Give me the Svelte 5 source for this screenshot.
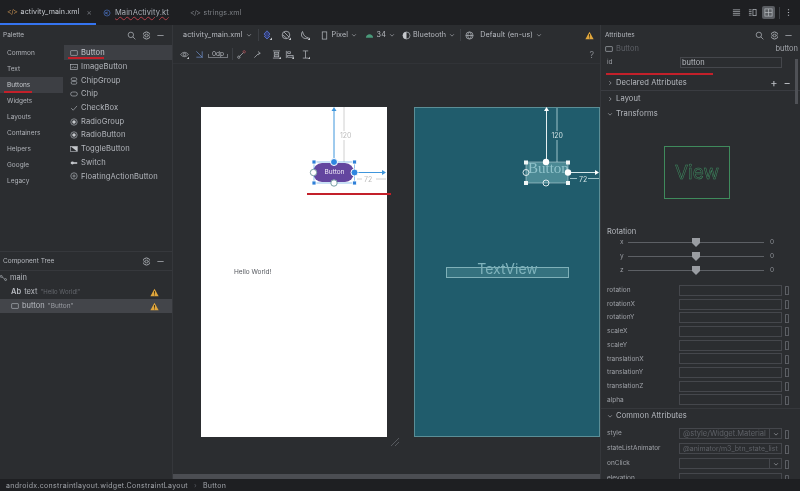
<script>
  const cats = ['Common','Text','Buttons','Widgets','Layouts','Containers','Helpers','Google','Legacy'];
  const items = ['Button','ImageButton','ChipGroup','Chip','CheckBox','RadioGroup','RadioButton','ToggleButton','Switch','FloatingActionButton'];
  const fields = ['rotation','rotationX','rotationY','scaleX','scaleY','translationX','translationY','translationZ','alpha'];
  const sliders = ['x','y','z'];
</script>

{#snippet gear()}
  <svg class="ic" viewBox="0 0 10 10"><circle cx="5" cy="5" r="1.5"/><path d="M4 1h2l.3 1.2 1.2-.5 1 1.7-1 .9.1 1.4 1 .9-1 1.7-1.2-.5L6 9H4l-.3-1.2-1.2.5-1-1.7 1-.9-.1-1.4-1-.9 1-1.7 1.2.5z"/></svg>
{/snippet}
{#snippet search()}
  <svg class="ic" viewBox="0 0 10 10"><circle cx="4.3" cy="4.3" r="3"/><path d="M6.5 6.5 9.3 9.3"/></svg>
{/snippet}
{#snippet minus()}
  <svg class="ic" viewBox="0 0 10 10"><path d="M1.5 5h7"/></svg>
{/snippet}
{#snippet warn()}
  <svg class="warn" viewBox="0 0 10 10"><path d="M5 .8 9.6 9.2H.4z" fill="#e0a63c"/><path d="M5 3.4v3M5 7.2v1" stroke="#3a2d12" stroke-width="1"/></svg>
{/snippet}
{#snippet chev()}
  <svg class="chev" viewBox="0 0 8 8"><path d="M1.5 3 4 5.5 6.5 3"/></svg>
{/snippet}
{#snippet arrowR()}
  <svg class="chev" viewBox="0 0 8 8"><path d="M3 1.5 5.5 4 3 6.5"/></svg>
{/snippet}
{#snippet corner()}
  <path class="fill" d="M7.6 10H10V7.6z"/>
{/snippet}

<div class="app">
  <header class="tabs">
    <div class="tab active">
      <span class="code orange">&lt;/&gt;</span><span>activity_main.xml</span><span class="close">×</span>
    </div>
    <div class="tab kt">
      <svg class="ic kotlin" viewBox="0 0 10 10"><circle cx="5" cy="5" r="3.8"/><path d="M3.5 3.5v3M3.5 5 6.5 3.5M3.5 5l3 1.8"/></svg>
      <span class="squiggle">MainActivity.kt</span>
    </div>
    <div class="tab dim">
      <span class="code">&lt;/&gt;</span><span>strings.xml</span>
    </div>
    <div class="spacer"></div>
    <div class="modes">
      <svg class="ic" viewBox="0 0 10 10"><path d="M1 2h8M1 4h8M1 6h8M1 8h8"/></svg>
      <svg class="ic m2" viewBox="0 0 10 10"><path d="M1 2h3M1 4h3M1 6h3M1 8h3"/><rect x="5.5" y="1.5" width="3.5" height="7"/></svg>
      <span class="mode-on"><svg class="ic" viewBox="0 0 10 10"><rect x="1" y="1" width="8" height="8"/><path d="M1 5h8M5 1v8"/></svg></span>
      <i class="sep modesep"></i>
      <svg class="ic dots" viewBox="0 0 10 10"><path d="M5 1.5v1M5 4.5v1M5 7.5v1" stroke-width="1.3"/></svg>
    </div>
  </header>

  <div class="main">
    <aside class="left">
      <section class="palette">
        <div class="phead"><span>Palette</span><span class="tools">{@render search()}{@render gear()}{@render minus()}</span></div>
        <div class="pbody">
          <ul class="cats">
            {#each cats as c}
              <li class:sel={c === 'Buttons'}>{c}</li>
            {/each}
          </ul>
          <ul class="items">
            {#each items as it, i}
              <li class:sel={i === 0}>
                <svg class="ic" viewBox="0 0 10 10">
                  {#if i === 0}<rect x=".8" y="2" width="8.4" height="6" rx=".6"/>
                  {:else if i === 1}<rect x=".8" y="2" width="8.4" height="6"/><path d="M2 6.5 4 4.5l1.5 1.5L7 5l1 1.5"/>
                  {:else if i === 2}<rect x="1.5" y="1" width="7" height="3.5" rx="1.7"/><rect x="1.5" y="5.5" width="7" height="3.5" rx="1.7"/>
                  {:else if i === 3}<rect x=".8" y="2.5" width="8.4" height="5" rx="2.5"/>
                  {:else if i === 4}<path d="M1.5 5.2 4 7.8 8.8 2.4"/>
                  {:else if i === 5 || i === 6}<circle cx="5" cy="5" r="4"/><circle class="fill" cx="5" cy="5" r="2.2"/>
                  {:else if i === 7}<rect x=".8" y="2" width="8.4" height="6"/><path class="fill" d="M1 2h8v6z"/>
                  {:else if i === 8}<rect class="fill" x="1" y="4" width="8" height="2"/><circle class="fill" cx="3" cy="5" r="1.8"/>
                  {:else}<circle cx="5" cy="5" r="4"/><path d="M5 3v4M3 5h4"/>{/if}
                </svg>
                <span>{it}</span>
              </li>
            {/each}
          </ul>
        </div>
      </section>
      <section class="tree">
        <div class="phead thead"><span>Component Tree</span><span class="tools">{@render gear()}{@render minus()}</span></div>
        <div class="node root">
          <svg class="ic" viewBox="0 0 10 10"><circle cx="1.5" cy="3" r="1.2"/><circle cx="7" cy="7" r="1.2"/><path d="M2.5 3.8 6 6.3"/></svg>
          <span>main</span>
        </div>
        <div class="node n1"><b>Ab</b> <span>text</span> <em>"Hello World!"</em>{@render warn()}</div>
        <div class="node n1 sel">
          <svg class="ic" viewBox="0 0 10 10"><rect x=".8" y="2" width="8.4" height="6" rx=".6"/></svg>
          <span>button</span> <span class="q">"Button"</span>{@render warn()}
        </div>
      </section>
    </aside>

    <section class="center">
      <div class="bar1">
        <span class="t">activity_main.xml</span>{@render chev()}
        <i class="sep s1"></i>
        <svg class="ib layers" viewBox="0 0 10 10"><path d="M5 .8 8 4 5 7.5 2 4z"/><path d="M2 6l3 3 3-3"/>{@render corner()}</svg>
        <svg class="ib orient" viewBox="0 0 10 10"><circle cx="5" cy="5" r="3.8"/><path d="M3 2 8 7M2 5l4 3.5"/>{@render corner()}</svg>
        <svg class="ib moon" viewBox="0 0 10 10"><path d="M2.5 1.5C3.5 5.500 5 7 8.500 8 6 9.500 1.500 8 1.500 5 1.500 3.500 1.800 2.300 2.500 1.500z"/>{@render corner()}</svg>
        <svg class="ib phone" viewBox="0 0 10 10"><rect x="2.5" y="1" width="5" height="8"/></svg>
        <span class="t pixel">Pixel</span>{@render chev()}
        <svg class="ib api" viewBox="0 0 10 10"><path d="M1 7.5C1 5 3 3.5 5 3.5S9 5 9 7.5z" fill="#4a9a7a" stroke="none"/></svg>
        <span class="t num">34</span>{@render chev()}
        <svg class="ib theme" viewBox="0 0 10 10"><circle cx="5" cy="5" r="3.9"/><path class="fill" d="M5 1a4 4 0 0 0 0 8z"/></svg>
        <span class="t bt">Bluetooth</span>{@render chev()}
        <i class="sep s2"></i>
        <svg class="ib globe" viewBox="0 0 10 10"><circle cx="5" cy="5" r="4"/><path d="M1 5h8M5 1c-2.5 2.5-2.5 5.5 0 8M5 1c2.5 2.500 2.500 5.500 0 8"/></svg>
        <span class="t def">Default (en-us)</span>{@render chev()}
        <span class="spacer"></span>
        {@render warn()}
      </div>
      <div class="bar2">
        <svg class="ib" viewBox="0 0 10 10"><path d="M.8 5C3 1.800 7 1.800 9.200 5 7 8.200 3 8.200.8 5z"/><circle cx="5" cy="5" r="1.4"/>{@render corner()}</svg>
        <svg class="ib b-magnet" viewBox="0 0 10 10"><path d="M1.5 1.5 8.5 8.5M8 1.5V8H1.5"/></svg>
        <span class="dp">0dp</span>
        <i class="sep s3"></i>
        <svg class="ib b-link" viewBox="0 0 10 10"><circle cx="2" cy="8" r="1.3"/><circle cx="8" cy="2" r="1.3" stroke="#b5525a"/><path d="M3 7 7 3"/></svg>
        <svg class="ib b-wand" viewBox="0 0 10 10"><path d="M1.5 8.5 6 4M6 1.5l.6 1.5 1.500.6-1.500.6-.6 1.500"/></svg>
        <svg class="ib b-pack" viewBox="0 0 10 10"><path d="M1 1h8M1 9h8"/><rect x="2.5" y="2.5" width="5" height="2"/><rect x="2.5" y="5.5" width="5" height="2"/>{@render corner()}</svg>
        <svg class="ib b-align" viewBox="0 0 10 10"><path d="M1.5 1v8"/><rect x="3" y="2" width="3" height="2"/><rect x="3" y="6" width="6" height="2"/>{@render corner()}</svg>
        <svg class="ib b-guide" viewBox="0 0 10 10"><path d="M2 1h6M2 9h6M5 1v8"/>{@render corner()}</svg>
        <span class="spacer"></span>
        <span class="help">?</span>
      </div>
      <div class="canvas">
        <div class="page design">
          <span class="hello">Hello World!</span>
          <svg class="over" viewBox="0 0 186 330" width="186" height="330">
            <rect x="112" y="56" width="41" height="19" rx="9" fill="#63469f"/>
            <path d="M143 0v55" stroke="#d0d0d0" fill="none"/>
            <path d="M133 55V3" stroke="#3f96dc" fill="none"/><path d="M133 0l-2.5 4h5z" fill="#3f96dc"/>
            <path d="M153 65.5h29" stroke="#3f96dc" fill="none"/><path d="M185 65.5l-4-2.5v5z" fill="#3f96dc"/>
            <path d="M156 72h5M175 72h10" stroke="#d0d0d0" fill="none"/>
            <rect x="113" y="55" width="40.5" height="21" fill="none" stroke="#4a9ae0" stroke-width=".6"/>
            <g fill="#2f80d8" stroke="#fff" stroke-width=".8"><rect x="111" y="53" width="4" height="4"/><rect x="151.5" y="53" width="4" height="4"/><rect x="111" y="74" width="4" height="4"/><rect x="151.5" y="74" width="4" height="4"/></g>
            <g stroke="#fff"><circle cx="133" cy="55" r="3.5" fill="#2f86e0"/><circle cx="153.5" cy="65.5" r="3.5" fill="#2f86e0"/></g>
            <circle cx="112.5" cy="65.5" r="3.2" fill="#fff" stroke="#7aa0a4"/><circle cx="133" cy="76" r="3.2" fill="#fff" stroke="#7aa0a4"/>
          </svg>
          <span class="btnlabel">Button</span>
          <span class="dim120 g">120</span>
          <span class="dim72 g">72</span>
        </div>
        <div class="page bp">
          <div class="bp-btn"><span>Button</span></div>
          <div class="bp-tv"><span>TextView</span></div>
          <svg class="over" viewBox="0 0 186 330" width="186" height="330">
            <path d="M143 1v54" stroke="#9cc2c8" fill="none"/>
            <path d="M132.5 55V4" stroke="#e4eff0" fill="none"/>
            <path d="M132.5 0l-2.5 4h5z" fill="#fff"/>
            <path d="M155 65.5h26" stroke="#d6e8ea" fill="none"/><path d="M185 65.5l-4-2.5v5z" fill="#fff"/>
            <path d="M156 71.5h7M174 71.5h11" stroke="#9cc2c8" fill="none"/>
            <rect x="112" y="55" width="42" height="21" fill="none" stroke="#cfe2e5" stroke-width=".5"/>
            <g fill="#f0f6f6"><rect x="110" y="53.5" width="4" height="4"/><rect x="152" y="53.5" width="4" height="4"/><rect x="110" y="74" width="4" height="4"/><rect x="152" y="74" width="4" height="4"/></g>
            <circle cx="132" cy="55" r="3.2" fill="#fff"/><circle cx="154" cy="65.5" r="3.2" fill="#fff"/>
            <circle cx="112" cy="65.5" r="3" fill="none" stroke="#dfeaec"/><circle cx="132" cy="76" r="3" fill="none" stroke="#dfeaec"/>
          </svg>
          <span class="dim120 b">120</span>
          <span class="dim72 b">72</span>
        </div>
        <svg class="resize" viewBox="0 0 10 10"><path d="M1 9 9 1M5 9l4-4"/></svg>
        <div class="hscroll"></div>
      </div>
    </section>

    <aside class="right">
      <div class="phead rhead"><span>Attributes</span><span class="tools">{@render search()}{@render gear()}{@render minus()}</span></div>
      <div class="rbtn">
        <svg class="ic" viewBox="0 0 10 10"><rect x=".8" y="2" width="8.4" height="6" rx=".6"/></svg>
        <span class="mute">Button</span><span class="spacer"></span><span>button</span>
      </div>
      <div class="idrow"><label for="idf">id</label><input id="idf" value="button" readonly /></div>
      <div class="sect line">{@render arrowR()}<span>Declared Attributes</span><span class="spacer"></span><span class="pm">+</span><span class="pm">−</span></div>
      <div class="sect">{@render arrowR()}<span>Layout</span></div>
      <div class="sect">{@render chev()}<span>Transforms</span></div>
      <div class="viewwrap"><div class="viewbox"><span>View</span></div></div>
      <div class="rotlabel">Rotation</div>
      {#each sliders as s}
        <div class="slider"><span class="axis">{s}</span><div class="track"><svg class="thumb" viewBox="0 0 8 9"><path d="M0 0h8v5L4 9 0 5z" fill="#9a9da2"/></svg></div><span class="val">0</span></div>
      {/each}
      <div class="flist">
        {#each fields as f}
          <div class="frow"><span class="fname">{f}</span><span class="fbox"></span><span class="br">[]</span></div>
        {/each}
      </div>
      <div class="sect common">{@render chev()}<span>Common Attributes</span></div>
      <div class="frow tall"><span class="fname">style</span><span class="fbox combo"><span>@style/Widget.Material</span><b>{@render chev()}</b></span><span class="br">[]</span></div>
      <div class="frow tall"><span class="fname">stateListAnimator</span><span class="fbox combo"><span class="clip">@animator/m3_btn_state_list</span></span><span class="br">[]</span></div>
      <div class="frow tall"><span class="fname">onClick</span><span class="fbox combo"><span></span><b>{@render chev()}</b></span><span class="br">[]</span></div>
      <div class="frow tall"><span class="fname">elevation</span><span class="fbox"></span><span class="br">[]</span></div>
      <div class="vscroll"></div>
    </aside>
  </div>

  <footer class="status"><span>androidx.constraintlayout.widget.ConstraintLayout</span><i>›</i><span>Button</span></footer>
  <i class="red r1"></i><i class="red r2"></i><i class="red r3"></i><i class="red r4"></i>
</div>

<style>
  :global(body) { margin: 0; background: #2b2d30; }
  .app { position: relative; width: 800px; height: 491px; overflow: hidden; display: flex; flex-direction: column; background: #2b2d30; color: #c3c6cc; font: 7px/1 Inter, "Noto Sans", sans-serif; filter: blur(.4px); }
  ul { list-style: none; margin: 0; padding: 0; }
  .spacer { flex: 1; }
  .ic { width: 8px; height: 8px; flex: none; fill: none; stroke: #b4b8be; stroke-width: .8; }
  .ic .fill, .ib .fill { fill: #c5c8cc; stroke: none; }
  .ib { width: 9px; height: 9px; flex: none; fill: none; stroke: #b4b8be; stroke-width: .8; }
  .warn { width: 9px; height: 9px; flex: none; }
  .chev { width: 6px; height: 6px; flex: none; fill: none; stroke: #a4a7ad; stroke-width: .9; }
  .sep { width: 1px; height: 12px; background: #3c3f44; flex: none; }

  .tabs { height: 25px; flex: none; display: flex; align-items: stretch; background: #1e1f22; font-size: 7.1px; letter-spacing: .1px; box-sizing: border-box; }
  .tab { display: flex; align-items: center; gap: 3px; padding: 0 7px; box-sizing: border-box; }
  .tab.active { width: 96px; border-bottom: 2px solid #3574f0; color: #c9ccd2; }
  .tab.kt { width: 84px; gap: 4px; color: #abb0b8; }
  .tab.kt span { font-size: 7.5px; }
  .tab.dim { color: #7d8086; padding-left: 10px; }
  .code { font-size: 7px; color: #85888e; letter-spacing: -.4px; }
  .orange { color: #c99252; }
  .close { color: #6e7177; margin-left: 4px; font-size: 8px; }
  .kotlin { stroke: #4d78cc; }
  .squiggle { text-decoration: underline wavy #b33f4a .5px; text-underline-offset: 1px; }
  .modes { display: flex; align-items: center; padding-right: 7.5px; }
  .modes .ic { width: 9px; height: 9px; }
  .modes .m2 { margin-left: 7px; }
  .mode-on { background: #5a5d62; width: 13px; height: 13px; display: flex; align-items: center; justify-content: center; border-radius: 2px; margin-left: 5px; }
  .modesep { margin-left: 3.5px; }
  .modes .dots { margin-left: 4px; }

  .main { flex: 1; min-height: 0; display: flex; }
  .left { width: 172px; flex: none; display: flex; flex-direction: column; border-right: 1px solid #35373b; box-sizing: content-box; }
  .phead { height: 20px; flex: none; display: flex; align-items: center; justify-content: space-between; padding: 0 4px 0 3px; font-size: 6.5px; color: #b5b8be; }
  .tools { display: flex; gap: 5.5px; align-items: center; padding-right: 3px; }
  .tools .ic { width: 9px; height: 9px; }
  .palette { height: 226px; flex: none; border-bottom: 1px solid #36383c; }
  .pbody { display: flex; }
  .cats { width: 64px; font-size: 6.5px; color: #aeb1b7; flex: none; }
  .cats li { height: 16px; display: flex; align-items: center; padding-left: 7px; }
  .cats li.sel { background: #3d3f44; color: #c4c7cc; margin-right: 1px; }
  .items { flex: 1; font-size: 7.6px; letter-spacing: .1px; color: #b3b6bc; }
  .items li { height: 13.7px; display: flex; align-items: center; gap: 3px; padding-left: 6px; }
  .items li.sel { height: 15px; background: #3d3f44; color: #c7cad0; }
  .thead { height: 18px; border-bottom: 1px solid #36383c; font-size: 6.5px; }
  .node { height: 14px; display: flex; align-items: center; gap: 3px; font-size: 7.5px; color: #b8bbc1; position: relative; }
  .root { gap: 2px; }
  .n1 { padding-left: 11px; }
  .n1 b { font-weight: 600; font-size: 7.5px; }
  .n1 em { font-style: normal; color: #65686e; font-size: 6px; }
  .q { color: #9a9da3; font-size: 6.5px; }
  .node.sel { background: #43454a; }
  .node .warn { position: absolute; left: 150px; top: 2.5px; }

  .center { flex: 1; min-width: 0; display: flex; flex-direction: column; }
  .bar1 { height: 20px; flex: none; display: flex; align-items: center; padding: 0 6px 0 10px; font-size: 7.2px; letter-spacing: .1px; }
  .bar1 .t { color: #b8bbc1; flex: none; }
  .bar1 .chev { margin-left: 3px; }
  .s1 { margin-left: 6px; }
  .layers { width: 10px; height: 10px; margin-left: 3px; stroke: #5b76d6; fill: #333f78; }
  .orient { width: 10px; height: 10px; margin-left: 9px; }
  .moon { width: 10px; height: 10px; margin-left: 9px; }
  .phone { margin-left: 10.5px; }
  .bar1 .pixel { margin-left: 2.5px; }
  .api { margin-left: 8px; }
  .bar1 .num { margin-left: 2.5px; }
  .theme { margin-left: 7.5px; }
  .bar1 .bt { margin-left: 1.5px; }
  .s2 { margin-left: 5px; }
  .globe { margin-left: 3.5px; }
  .bar1 .def { margin-left: 6.5px; }

  .bar2 { height: 18px; flex: none; display: flex; align-items: center; padding: 0 6px 0 6.5px; border-bottom: 1px solid #313337; }
  .b-magnet { margin-left: 6px; stroke: #6f8fc9; }
  .dp { position: relative; margin-left: 4.5px; width: 20px; height: 8px; font-size: 6.5px; color: #b8bbc1; border-bottom: 1px solid #74777d; display: flex; align-items: flex-end; justify-content: center; box-sizing: border-box; }
  .dp::before, .dp::after { content: ''; position: absolute; bottom: 0; width: 1px; height: 3px; background: #74777d; }
  .dp::before { left: 0; }
  .dp::after { right: 0; }
  .s3 { margin-left: 4px; }
  .b-link { margin-left: 3.5px; }
  .b-wand { margin-left: 7px; }
  .b-pack { margin-left: 10px; }
  .b-align { margin-left: 4px; }
  .b-guide { margin-left: 7px; }
  .help { color: #83868c; font-size: 9px; }

  .canvas { flex: 1; min-height: 0; position: relative; display: flex; align-items: flex-start; gap: 27px; padding: 43px 0 0 28px; background: #2b2d30; }
  .page { position: relative; flex: none; width: 186px; height: 330px; box-sizing: border-box; }
  .design { background: #fff; }
  .bp { background: #205c6c; outline: 1px solid #5b8e96; outline-offset: -1px; }
  .over { position: absolute; left: 0; top: 0; overflow: visible; }
  .hello { position: absolute; left: 33px; top: 162px; font-size: 6.5px; color: #55585e; white-space: nowrap; }
  .btnlabel { position: absolute; left: 113px; top: 62px; width: 41px; text-align: center; color: #f0ecf8; font-size: 6.5px; }
  .dim120, .dim72 { position: absolute; font-size: 7px; }
  .dim120 { top: 24px; }
  .dim72 { top: 68.5px; }
  .g { color: #bdbdbd; }
  .dim120.g { left: 138px; background: #fff; padding: 1px; }
  .dim72.g { left: 163px; }
  .dim120.b { left: 136.5px; color: #cfe0e2; background: #205c6c; padding: 1px; }
  .dim72.b { left: 165px; color: #cfe0e2; }
  .bp-btn { position: absolute; left: 112px; top: 55px; width: 42px; height: 21px; background: #4b8994; }
  .bp-btn span { position: absolute; left: 2px; top: -2px; font: 15px/17px "Liberation Serif", serif; color: #8fc2ca; white-space: nowrap; }
  .bp-tv { position: absolute; left: 33px; top: 161px; width: 121px; height: 9px; background: #35727f; outline: 1px solid #7fb0b8; display: flex; justify-content: center; }
  .bp-tv span { font: 14px/7px Inter, sans-serif; color: #7fb3bc; white-space: nowrap; margin-top: -3px; }
  .resize { position: absolute; left: 217px; top: 373px; width: 10px; height: 10px; fill: none; stroke: #63666c; stroke-width: .8; }
  .hscroll { position: absolute; left: 0; right: 0; bottom: 0; height: 5px; background: #4b4d52; }

  .right { width: 200px; flex: none; position: relative; overflow: hidden; display: flex; flex-direction: column; border-left: 1px solid #36383c; box-sizing: border-box; font-size: 6.5px; }
  .rhead { padding-left: 4px; }
  .rbtn { height: 12px; display: flex; align-items: center; gap: 3px; padding: 0 2px 0 4px; font-size: 7.5px; color: #a5a8ae; }
  .mute { color: #5e6167; }
  .idrow { height: 13px; display: flex; align-items: center; margin-top: 4px; padding-left: 6px; }
  .idrow label { width: 73px; color: #9a9da3; }
  .idrow input { width: 102px; height: 11px; box-sizing: border-box; background: transparent; border: 1px solid #45474c; color: #b9bcc2; font: 7.5px Inter, sans-serif; padding: 0 0 0 1px; outline: 0; }
  .sect { height: 15px; box-sizing: border-box; display: flex; align-items: center; gap: 3px; padding-left: 6px; font-size: 7.6px; color: #b6b9bf; letter-spacing: .1px; flex: none; }
  .sect.line { border-bottom: 1px solid #3a3c41; margin-top: 8px; padding-right: 9px; }
  .pm { font-size: 11px; margin-left: 3px; color: #c0c3c9; }
  .viewwrap { height: 106.5px; flex: none; padding: 24.5px 0 0 63px; box-sizing: border-box; }
  .viewbox { width: 66px; height: 53px; box-sizing: border-box; border: 1px solid #3f8a5c; display: flex; align-items: center; justify-content: center; }
  .viewbox span { font-size: 19px; color: transparent; -webkit-text-stroke: .5px #3f8f62; }
  .rotlabel { font-size: 7.5px; padding-left: 6px; height: 8px; color: #b6b9bf; flex: none; display: flex; align-items: center; }
  .slider { height: 14px; display: flex; align-items: center; padding-left: 19px; flex: none; }
  .axis { width: 8px; color: #9a9da3; }
  .track { position: relative; width: 136px; height: 1.5px; background: #5d6065; }
  .thumb { position: absolute; left: 64px; top: -4px; width: 8px; height: 9px; }
  .val { margin-left: 6px; color: #8f9298; }
  .flist { margin-top: 6px; display: flex; flex-direction: column; flex: none; }
  .frow { height: 13.7px; flex: none; display: flex; align-items: center; padding-left: 6px; }
  .frow.tall { height: 15px; }
  .fname { width: 72px; color: #9fa2a8; flex: none; white-space: nowrap; }
  .fbox { width: 103px; height: 11px; box-sizing: border-box; border: 1px solid #45474c; flex: none; display: flex; align-items: center; overflow: hidden; }
  .br { margin-left: 2px; color: #66696f; font-size: 10px; letter-spacing: -1.5px; }
  .combo { color: #5e6167; font-size: 7.5px; padding-left: 3px; justify-content: space-between; white-space: nowrap; }
  .combo b { width: 11px; height: 100%; border-left: 1px solid #45474c; display: flex; align-items: center; justify-content: center; flex: none; }
  .clip { overflow: hidden; font-size: 7px; }
  .common { margin-top: 1px; height: 16px; margin-bottom: 2.5px; border-top: 1px solid #36383c; }
  .vscroll { position: absolute; right: 2px; top: 34px; width: 3px; height: 45px; background: #4f5156; }

  .status { height: 12px; flex: none; display: flex; align-items: center; gap: 6px; padding-left: 6px; background: #1e1f22; color: #a2a5ab; font-size: 7px; letter-spacing: .32px; position: relative; z-index: 1; }
  .status i { font-style: normal; color: #55585e; }

  .red { position: absolute; height: 1.5px; background: #c3202a; z-index: 2; }
  .r1 { left: 68px; top: 57px; width: 36px; }
  .r2 { left: 4px; top: 91px; width: 28px; }
  .r3 { left: 606px; top: 73px; width: 107px; }
  .r4 { left: 307px; top: 193px; width: 84px; }
</style>
